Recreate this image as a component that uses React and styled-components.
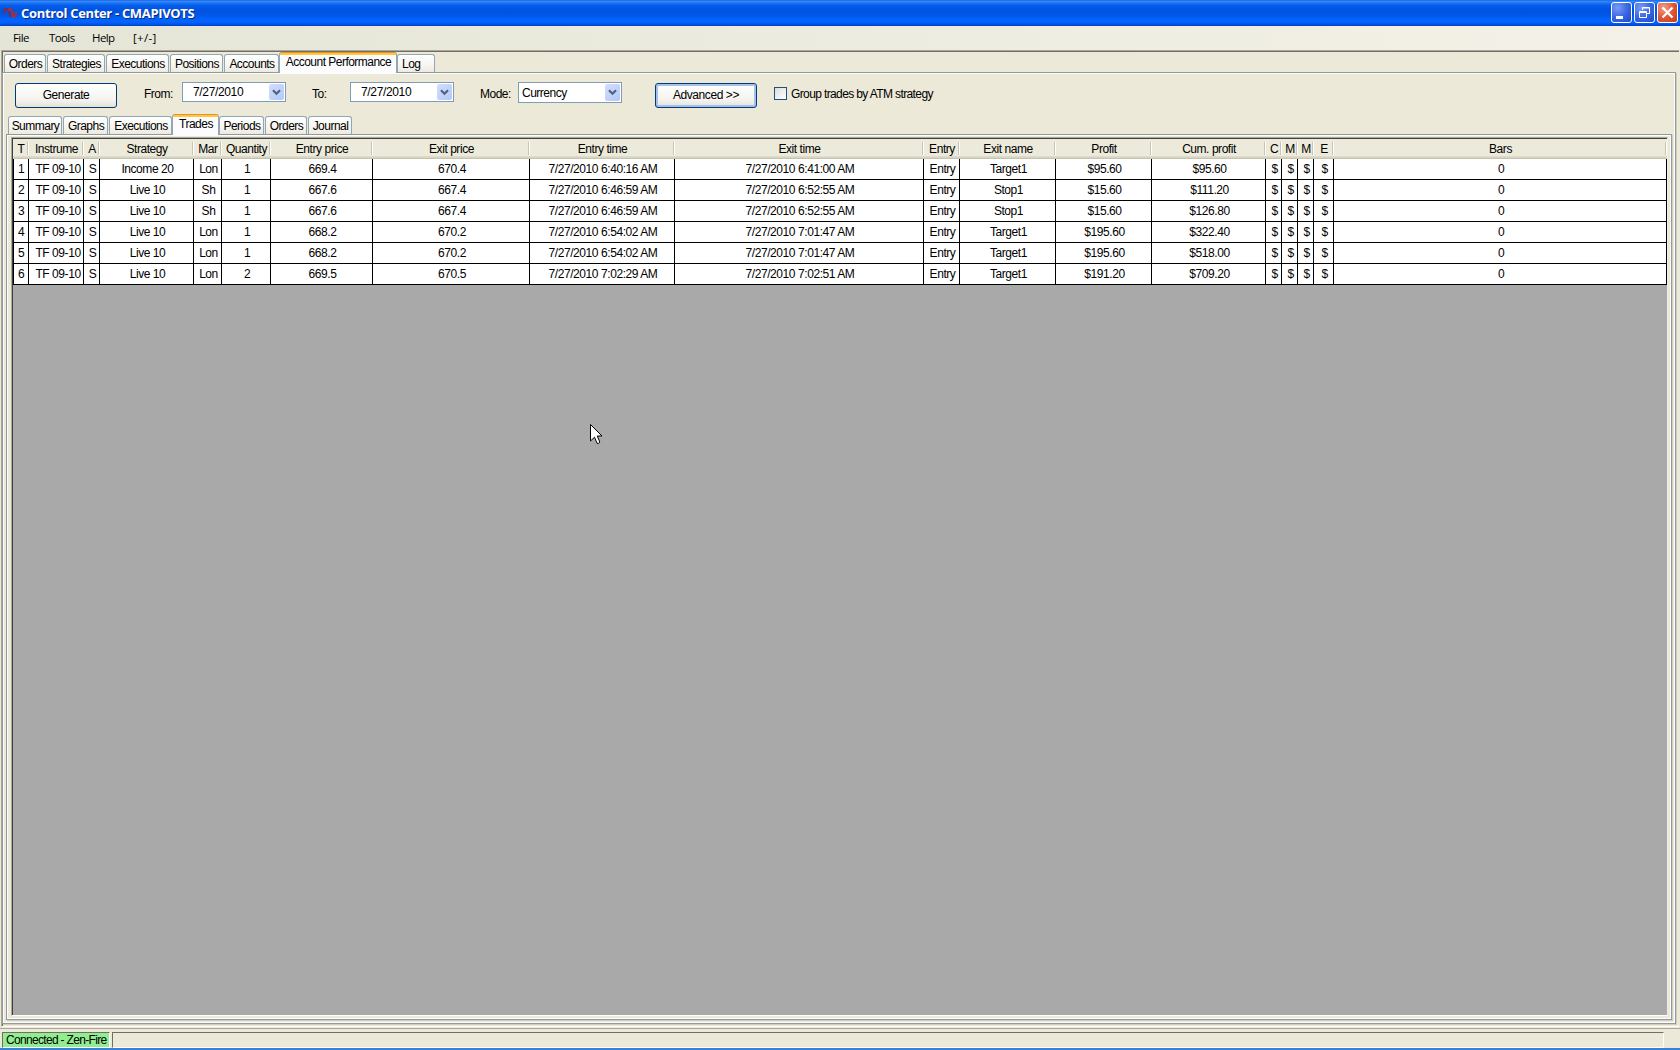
import React from 'react'
import styled, { createGlobalStyle, css } from 'styled-components'

const GlobalStyle = createGlobalStyle`
	* { box-sizing: border-box; }
	html, body { margin: 0; padding: 0; overflow: hidden; }
	body {
		font-family: "Liberation Sans", Arial, sans-serif;
		font-size: 12px;
		letter-spacing: -0.52px;
		color: #000;
		cursor: default;
	}
`

const columns = [
	['T', 16], ['Instrume', 55], ['A', 16], ['Strategy', 94], ['Mar', 28],
	['Quantity', 49], ['Entry price', 102], ['Exit price', 157],
	['Entry time', 145], ['Exit time', 249], ['Entry', 36], ['Exit name', 96],
	['Profit', 96], ['Cum. profit', 114], ['C', 16], ['M', 16], ['M', 16],
	['E', 20], ['Bars', 333],
]

const trades = [
	['Income 20', 'Lon', 1, '669.4', '670.4', '6:40:16', '6:41:00', 'Target1', '$95.60', '$95.60'],
	['Live 10', 'Sh', 1, '667.6', '667.4', '6:46:59', '6:52:55', 'Stop1', '$15.60', '$111.20'],
	['Live 10', 'Sh', 1, '667.6', '667.4', '6:46:59', '6:52:55', 'Stop1', '$15.60', '$126.80'],
	['Live 10', 'Lon', 1, '668.2', '670.2', '6:54:02', '7:01:47', 'Target1', '$195.60', '$322.40'],
	['Live 10', 'Lon', 1, '668.2', '670.2', '6:54:02', '7:01:47', 'Target1', '$195.60', '$518.00'],
	['Live 10', 'Lon', 2, '669.5', '670.5', '7:02:29', '7:02:51', 'Target1', '$191.20', '$709.20'],
]

const toCells = ([strategy, market, qty, entry, exit, entryTime, exitTime, exitName, profit, cum], i) => [
	i + 1, 'TF 09-10', 'S', strategy, market, qty, entry, exit,
	`7/27/2010 ${entryTime} AM`, `7/27/2010 ${exitTime} AM`,
	'Entry', exitName, profit, cum, '$', '$', '$', '$', 0,
]

const Window = styled.div`
	display: flex;
	flex-direction: column;
	width: 1680px;
	height: 1050px;
	background: #ece9d8;
	border-bottom: 2px solid #3a80d8;
`

const TitleBar = styled.div`
	display: flex;
	align-items: center;
	flex: none;
	height: 26px;
	padding: 0 2px 1px 3px;
	background: linear-gradient(#0a50d0 0, #3c90ff 1px, #2a80f8 2px, #0660ec 5px, #0054e3 9px, #0055e5 15px, #0262fb 19px, #0365ff 22px, #0056ea 24px, #0040c4 26px);
`

const Title = styled.div`
	flex: 1;
	margin-left: 4px;
	font: 700 13px "Open Sans", sans-serif;
	letter-spacing: -0.33px;
	color: #fff;
	text-shadow: 1px 1px 0 #0a2a80;
`

const CaptionButton = styled.div`
	width: 21px;
	height: 21px;
	margin-left: 2px;
	border: 1px solid #fff;
	border-radius: 3px;
	background: ${p => p.$close
		? 'radial-gradient(circle at 30% 25%, #f0a088, #e0583a 50%, #c83a14)'
		: 'radial-gradient(circle at 30% 25%, #7a9cf4, #3a68e4 50%, #1c48c8)'};
	svg { display: block; }
`

const MenuBar = styled.div`
	display: flex;
	flex: none;
	height: 24px;
	background: linear-gradient(90deg, #e5e5d7, #f4f2e8);
	font: 11.5px/24px "Open Sans", sans-serif;
	letter-spacing: -0.6px;
`

const MenuItem = styled.div`
	width: ${p => p.$w}px;
	&:first-child { margin-left: 13px; }
	&:last-child { letter-spacing: 0.3px; }
`

const Client = styled.div`
	display: flex;
	flex-direction: column;
	flex: none;
	height: 977px;
	margin: 0 1px 0 1px;
	padding: 0 3px 2px 0;
	border: 1px solid #aca899;
	border-right: 0;
	border-bottom-color: #fff;
	box-shadow: inset 1px 1px 0 #716f64;
`

const TabStrip = styled.div`
	display: flex;
	align-items: flex-end;
	flex: none;
	height: ${p => p.$h}px;
	padding-left: ${p => p.$pad}px;
`

const Tab = styled.div`
	position: relative;
	width: ${p => p.$w}px;
	height: 18px;
	margin-right: ${p => (p.$tight ? 0 : 1)}px;
	border: 1px solid #91a7b4;
	border-bottom: 0;
	border-radius: 3px 3px 0 0;
	background: linear-gradient(#fff, #f6f5f0 60%, #eceae0);
	line-height: 18px;
	text-align: ${p => (p.$left ? 'left' : 'center')};
	padding-left: ${p => (p.$left ? 4 : 1)}px;
	white-space: nowrap;
	${p => p.$active && css`
		height: 21px;
		margin-bottom: -1px;
		border-top: 0;
		background: linear-gradient(#e5912d 0, #e5912d 1px, #ffc73c 1px, #ffc73c 3px, #fcfcfe 3px);
		line-height: 20px;
		z-index: 1;
	`}
`

const Page = styled.div`
	display: flex;
	flex-direction: column;
	flex: 1;
	border: 1px solid #919b9c;
	box-shadow: inset 0 0 0 1px #fcfcfe, 1px 1px 0 #d0cebf;
	padding: ${p => p.$pad};
	min-height: 0;
`

const Toolbar = styled.div`
	display: flex;
	align-items: flex-start;
	flex: none;
	height: 41px;
	padding: 10px 0 0 9px;
`

const Button = styled.div`
	width: ${p => p.$w}px;
	height: 25px;
	margin-left: ${p => p.$ml || 0}px;
	border: 1px solid #003c74;
	border-radius: 3px;
	background: linear-gradient(#fff, #f4f3ee 70%, #e4e0d4);
	box-shadow: ${p => (p.$focus ? 'inset 0 0 0 2px #a4bff0, inset 0 -2px 0 #6982ee' : 'none')};
	line-height: 23px;
	letter-spacing: -0.42px;
	text-align: center;
`

const Label = styled.div`
	width: ${p => p.$w}px;
	margin-left: ${p => p.$ml}px;
	line-height: 22px;
	letter-spacing: ${p => p.$ls || -0.52}px;
	white-space: nowrap;
`

const Field = styled.div`
	display: flex;
	justify-content: space-between;
	width: ${p => p.$w}px;
	height: ${p => p.$h}px;
	margin-top: -1px;
	padding: 1px 1px 1px ${p => p.$indent}px;
	border: 1px solid #7f9db9;
	background: #fff;
	line-height: ${p => p.$h - 3}px;
	letter-spacing: ${p => p.$ls || -0.5}px;
`

const Arrow = styled.div`
	display: flex;
	align-items: center;
	justify-content: center;
	width: 15px;
	border-radius: 2px;
	background: linear-gradient(135deg, #d2defc, #b4c8f6);
`

const CheckBox = styled.div`
	width: 13px;
	height: 13px;
	margin: 4px 0 0 17px;
	border: 1px solid #1c5180;
	background: linear-gradient(135deg, #dcdcd7, #fff);
`

const GridFrame = styled.div`
	flex: 1;
	border: 1px solid #aca899;
	border-right-color: #f1efe2;
	border-bottom-color: #fff;
	background: #a9a9a9;
	box-shadow: inset 1px 1px 0 #404040;
	padding: 1px 0 0 1px;
	overflow: hidden;
`

const GridRow = styled.div`
	display: grid;
	grid-template-columns: ${columns.map(c => c[1] + 'px').join(' ')};
	width: 1654px;
`

const HeadCell = styled.div`
	height: 20px;
	border-bottom: 1px solid #c5c2b0;
	background:
		linear-gradient(#c7c5b2, #c7c5b2) right 1px top 3px / 1px 13px no-repeat,
		linear-gradient(#fff, #fff) right 0 top 3px / 1px 13px no-repeat,
		linear-gradient(#ebeadb 0, #ebeadb 17px, #e2decd 17px, #d6d2c2 19px);
	line-height: 20px;
	letter-spacing: -0.45px;
	text-align: center;
	white-space: nowrap;
	overflow: hidden;
`

const Cell = styled.div`
	height: 21px;
	padding-left: ${p => p.$shift}px;
	border-right: 1px solid #000;
	border-bottom: 1px solid #000;
	background: #fff;
	line-height: 20px;
	letter-spacing: -0.43px;
	text-align: center;
	white-space: nowrap;
	overflow: hidden;
	&:first-child { border-left: 1px solid #000; }
`

const StatusBar = styled.div`
	display: flex;
	flex: 1;
	margin-top: 1px;
	padding: 3px 16px 0 2px;
	border-top: 1px solid #aca899;
	gap: 2px;
`

const StatusCell = styled.div`
	width: ${p => (p.$w ? p.$w + 'px' : 'auto')};
	flex: ${p => (p.$w ? 'none' : 1)};
	height: 16px;
	padding-left: 3px;
	border: 1px solid #716f64;
	border-right-color: #fff;
	border-bottom-color: #fff;
	background: ${p => (p.$on ? '#90ee90' : 'transparent')};
	line-height: 15px;
	letter-spacing: -0.68px;
	white-space: nowrap;
`

const Pointer = styled.svg`
	position: absolute;
	left: 590px;
	top: 424px;
`

const Chevron = () => (
	<Arrow>
		<svg width="9" height="7" viewBox="0 0 9 7">
			<path d="M1 1.2 L4.5 4.7 L8 1.2" fill="none" stroke="#4d6185" strokeWidth="2.2" />
		</svg>
	</Arrow>
)

const Logo = () => (
	<svg width="14" height="12" viewBox="0 0 14 12">
		<path d="M1 7 C1 1 4 0 5.5 4 C6.5 7 7 9 8 10" fill="none" stroke="#6c3058" strokeWidth="2" />
		<path d="M5.5 4 C6.5 1 8 1 9 4 C10 12 13 11 13 5" fill="none" stroke="#c02828" strokeWidth="2" />
	</svg>
)

const Tabs = ({ items, active, h, pad }) => (
	<TabStrip $h={h} $pad={pad}>
		{items.map(([label, w, left], i) => (
			<Tab key={label} $w={w} $left={left} $active={i === active} $tight={i === active || i === active - 1}>
				{label}
			</Tab>
		))}
	</TabStrip>
)

const mainTabs = [
	['Orders', 42], ['Strategies', 58], ['Executions', 63], ['Positions', 53],
	['Accounts', 55], ['Account Performance', 118], ['Log', 38, true],
]

const reportTabs = [
	['Summary', 54], ['Graphs', 45], ['Executions', 63], ['Trades', 47],
	['Periods', 45], ['Orders', 42], ['Journal', 44],
]

// left padding that nudges the centred text of a column
const shiftOf = i => (i === 0 ? 0 : i === 1 ? 4 : 2)

const TradeGrid = () => (
	<GridFrame>
		<GridRow>
			{columns.map(([name], i) => <HeadCell key={i}>{name}</HeadCell>)}
		</GridRow>
		{trades.map((trade, r) => (
			<GridRow key={r}>
				{toCells(trade, r).map((v, i) => <Cell key={i} $shift={shiftOf(i)}>{v}</Cell>)}
			</GridRow>
		))}
	</GridFrame>
)

const App = () => (
	<Window>
		<GlobalStyle />
		<TitleBar>
			<Logo />
			<Title>Control Center - CMAPIVOTS</Title>
			<CaptionButton>
				<svg width="19" height="19"><path d="M4 14.5h7" stroke="#fff" strokeWidth="3" /></svg>
			</CaptionButton>
			<CaptionButton>
				<svg width="19" height="19" fill="none" stroke="#fff">
					<path d="M7.5 7V4.5h7v6H12M7 5h8" />
					<path d="M4.5 8.5h7v6h-7zM4 9.5h8" />
				</svg>
			</CaptionButton>
			<CaptionButton $close>
				<svg width="19" height="19"><path d="M4.5 4.5l10 10M14.5 4.5l-10 10" stroke="#fff" strokeWidth="2.2" /></svg>
			</CaptionButton>
		</TitleBar>
		<MenuBar>
			<MenuItem $w={36}>File</MenuItem>
			<MenuItem $w={43}>Tools</MenuItem>
			<MenuItem $w={41}>Help</MenuItem>
			<MenuItem $w={40}>[+/-]</MenuItem>
		</MenuBar>
		<Client>
			<Tabs items={mainTabs} active={5} h={21} pad={2} />
			<Page $pad="0 3px 3px 3px">
				<Toolbar>
					<Button $w={102}>Generate</Button>
					<Label $ml={27} $w={38}>From:</Label>
					<Field $w={104} $h={20} $indent={10} $ls={-0.35}>7/27/2010<Chevron /></Field>
					<Label $ml={26} $w={38}>To:</Label>
					<Field $w={104} $h={20} $indent={10} $ls={-0.35}>7/27/2010<Chevron /></Field>
					<Label $ml={26} $w={38}>Mode:</Label>
					<Field $w={104} $h={21} $indent={3}>Currency<Chevron /></Field>
					<Button $w={102} $ml={33} $focus>Advanced &gt;&gt;</Button>
					<CheckBox />
					<Label $ml={4} $w={160} $ls={-0.62}>Group trades by ATM strategy</Label>
				</Toolbar>
				<Tabs items={reportTabs} active={3} h={20} pad={2} />
				<Page $pad="2px 3px 3px 4px">
					<TradeGrid />
				</Page>
			</Page>
		</Client>
		<StatusBar>
			<StatusCell $w={108} $on>Connected - Zen-Fire</StatusCell>
			<StatusCell />
		</StatusBar>
		<Pointer width="14" height="22" viewBox="0 0 14 22">
			<path d="M0.5 0.5V17L4.5 13.2L7 19.2Q8.5 20.5 9.8 18L7.3 12H12Z" fill="#fff" stroke="#000" />
		</Pointer>
	</Window>
)

export default App
